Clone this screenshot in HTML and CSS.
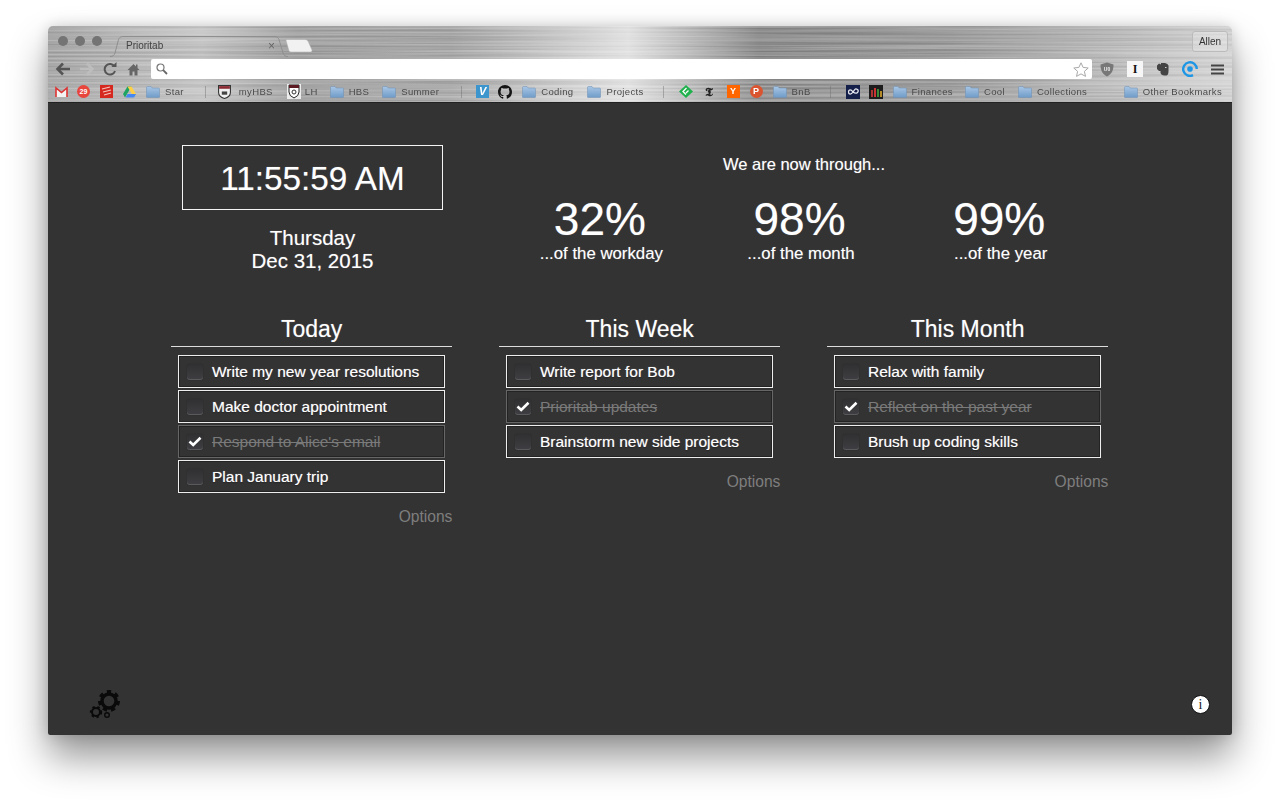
FILE: index.html
```html
<!DOCTYPE html>
<html lang="en">
<head>
<meta charset="utf-8">
<title>Prioritab</title>
<link rel="stylesheet" href="styles.css">
</head>
<body>
<svg class="defs" width="0" height="0" aria-hidden="true">
  <defs>
    <linearGradient id="fg" x1="0" y1="0" x2="0" y2="1"><stop offset="0" stop-color="#a9c6e4"/><stop offset="1" stop-color="#6f9cc9"/></linearGradient>
    <symbol id="folder" viewBox="0 0 14 12"><path d="M0.5 2V1.5Q0.5 0.5 1.5 0.5H5L6.2 2H12.5Q13.5 2 13.5 3V11Q13.5 11.5 13 11.5H1Q0.5 11.5 0.5 11Z" fill="url(#fg)" stroke="#6d8fb2" stroke-width=".5"/></symbol>
    <filter id="brushed" x="0" y="0" width="100%" height="100%" color-interpolation-filters="sRGB">
      <feTurbulence type="fractalNoise" baseFrequency="0.003 0.5" numOctaves="3" seed="7"/>
      <feColorMatrix type="matrix" values="2.500 0 0 0 -.75  2.500 0 0 0 -.75  2.500 0 0 0 -.75  0 0 0 0 1"/>
    </filter>
  </defs>
</svg>
<main class="window">
  <header class="chrome">
    <svg class="metal" width="1184" height="77" aria-hidden="true"><rect width="1184" height="77" filter="url(#brushed)"/></svg>
    <div class="tabstrip">
      <div class="lights"><i></i><i></i><i></i></div>
      <div class="tab">
        <svg class="tab-shape" width="178" height="21" viewBox="0 0 178 21" aria-hidden="true"><path d="M0 20.500C3 20.500 4 19.500 5 17L8.500 3.500C9.500 1.500 10.500 .5 13 .5H165C167 .5 168 1.500 169 3.500L173 17C174 19.500 175 20.500 178 20.500" fill="none" stroke="#8f8f8f"/></svg>
        <span class="tab-title">Prioritab</span>
        <span class="tab-close">×</span>
      </div>
      <svg class="newtab" width="28" height="14" viewBox="0 0 28 14" aria-hidden="true"><path d="M1 1.500Q1 .5 2 .5H20Q22 .5 23 2L27 11Q27.500 13 25.500 13H6Q4.500 13 4 12Z" fill="#f1f1f1" stroke="#aaa" stroke-width=".5"/></svg>
      <div class="profile">Allen</div>
    </div>
    <div class="toolbar">
      <svg class="tb back" width="16" height="14" viewBox="0 0 16 14" aria-hidden="true"><path d="M15 7H3M8 1.500 2.500 7 8 12.500" fill="none" stroke="#555" stroke-width="2.600"/></svg>
      <svg class="tb fwd" width="16" height="14" viewBox="0 0 16 14" aria-hidden="true"><path d="M1 7H13M8 1.500 13.500 7 8 12.500" fill="none" stroke="#bdbdbd" stroke-width="2.600"/></svg>
      <svg class="tb reload" width="14" height="14" viewBox="0 0 14 14" aria-hidden="true"><path d="M11.500 4.500A5.300 5.300 0 1 0 12 9" fill="none" stroke="#555" stroke-width="2"/><path d="M8.500 5H13.500V0Z" fill="#555"/></svg>
      <svg class="tb home" width="13" height="13" viewBox="0 0 13 13" aria-hidden="true"><path d="M6.500 1 0.500 7H2.500V12.500H5.500V8.500H7.500V12.500H10.500V7H12.500L10.500 5V1.500H9V3.500Z" fill="#666"/></svg>
      <div class="omnibox">
        <svg width="12" height="12" viewBox="0 0 12 12" aria-hidden="true"><circle cx="4.500" cy="4.500" r="3.500" fill="none" stroke="#777" stroke-width="1.200"/><path d="M7.200 7.200 11 11" stroke="#666" stroke-width="1.800"/></svg>
        <svg width="16" height="15" viewBox="0 0 16 15" aria-hidden="true"><path d="M8 .8 10.100 5.400 15.200 6 11.400 9.400 12.500 14.400 8 11.900 3.500 14.400 4.600 9.400 .8 6 5.900 5.400Z" fill="#fff" stroke="#a8a8a8"/></svg>
      </div>
      <svg class="ext ublock" width="14" height="15" viewBox="0 0 14 15" aria-hidden="true"><path d="M7 .5 13.500 2.500C13.500 8 12 12 7 14.500 2 12 .5 8 .5 2.500Z" fill="#777"/><text x="7" y="9" text-anchor="middle" class="ub">U0</text></svg>
      <div class="ext ibox">I</div>
      <svg class="ext elephant" width="13" height="14" viewBox="0 0 13 14" aria-hidden="true"><path d="M3 1.500 1 3.500V7L3 9H4.500V11Q5 13 8 13.500H10.500Q12.500 13 12.500 9V3.500Q12 1.500 9 1H5V2.500Z" fill="#444"/><path d="M9 5.500H10.500" stroke="#ccc"/></svg>
      <svg class="ext at" width="16" height="16" viewBox="0 0 16 16" aria-hidden="true"><path d="M14.800 8A6.800 6.800 0 1 0 11 14.200" fill="none" stroke="#1e96e6" stroke-width="2.400"/><circle cx="8" cy="8" r="2.800" fill="#1e96e6"/></svg>
      <svg class="ext menu" width="13" height="11" viewBox="0 0 13 11" aria-hidden="true"><path d="M0 1.500H13M0 5.500H13M0 9.500H13" stroke="#444" stroke-width="1.800"/></svg>
    </div>
    <nav class="bookmarks">
      <svg class="bm-icon g7" width="13" height="12" viewBox="0 0 13 12" aria-hidden="true"><path d="M1 11V2L6.500 6.500 12 2V11" fill="#f3f3f3" stroke="#d33" stroke-width="1.600"/></svg>
      <span class="bm-badge g9">29</span>
      <svg class="bm-icon g10" width="13" height="13" viewBox="0 0 13 13" aria-hidden="true"><rect width="13" height="13" fill="#d5281f"/><path d="M2 4 10 2M3 7 11 5M4 10 11 8" stroke="#f6c5bf" stroke-width="1.200"/></svg>
      <svg class="bm-icon g10" width="13" height="12" viewBox="0 0 13 12" aria-hidden="true"><path d="M4.500 .5H8.500L4 8 2 11.500 0 8Z" fill="#1ea362"/><path d="M4.500 .5H8.500L13 8H9Z" fill="#ffcf48"/><path d="M2.500 11.500 4.500 8H13L11 11.500Z" fill="#4688f1"/></svg>
      <a class="bm g10"><svg width="14" height="12"><use href="#folder"/></svg>Star</a>
      <span class="sep g21"></span>
      <svg class="bm-icon g12" width="13" height="14" viewBox="0 0 12 13" aria-hidden="true"><path d="M.5 .5H11.500V7Q11.500 11 6 12.500 .5 11 .5 7Z" fill="#efefef" stroke="#333"/><path d="M1 1H11V3.500H1Z" fill="#8a2a32"/><path d="M3.500 6H8.500V9H3.500Z" fill="#444"/></svg>
      <a class="bm g8">myHBS</a>
      <svg class="bm-icon g14" width="14" height="15" viewBox="0 0 14 15" aria-hidden="true"><rect width="14" height="15" fill="#ededed"/><path d="M2 1H12V8Q12 12 7 14 2 12 2 8Z" fill="#fff" stroke="#222"/><path d="M2 1H12V4H2Z" fill="#5c1a22"/><circle cx="7" cy="8" r="2" fill="none" stroke="#333"/></svg>
      <a class="bm g4">LH</a>
      <a class="bm g12"><svg width="14" height="12"><use href="#folder"/></svg>HBS</a>
      <a class="bm g13"><svg width="14" height="12"><use href="#folder"/></svg>Summer</a>
      <span class="sep g22"></span>
      <span class="bm-venmo g14">V</span>
      <svg class="bm-icon g9" width="14" height="14" viewBox="0 0 16 16" aria-hidden="true"><path d="M8 0C3.580 0 0 3.580 0 8c0 3.540 2.290 6.530 5.470 7.590.4.070.55-.17.55-.38 0-.19-.01-.82-.01-1.490-2.010.37-2.530-.49-2.690-.94-.09-.23-.48-.94-.82-1.130-.28-.15-.68-.52-.01-.53.63-.01 1.080.58 1.230.82.720 1.210 1.870.870 2.330.660.070-.520.280-.870.510-1.070-1.780-.2-3.640-.89-3.640-3.950 0-.870.310-1.590.820-2.150-.08-.2-.36-1.020.08-2.120 0 0 .67-.21 2.200.820.640-.18 1.320-.270 2-.270s1.360.09 2 .270c1.530-1.040 2.200-.820 2.200-.820.440 1.100.160 1.920.08 2.120.510.560.820 1.270.820 2.150 0 3.070-1.870 3.750-3.650 3.950.290.250.540.730.540 1.480 0 1.070-.01 1.930-.01 2.200 0 .210.150.460.550.380A8.013 8.013 0 0 0 16 8c0-4.420-3.580-8-8-8z" fill="#151515"/></svg>
      <a class="bm g10"><svg width="14" height="12"><use href="#folder"/></svg>Coding</a>
      <a class="bm g14"><svg width="14" height="12"><use href="#folder"/></svg>Projects</a>
      <span class="sep g19"></span>
      <svg class="bm-icon g15" width="14" height="13" viewBox="0 0 14 13" aria-hidden="true"><path d="M7 0 14 6.500 7 13 0 6.500Z" fill="#1eb14c"/><path d="M7.500 3 4 6.500 7 9.500M9.500 5.500 7 8" stroke="#fff" stroke-width="1.300" fill="none"/></svg>
      <span class="bm-nyt g10">𝕿</span>
      <span class="bm-y g11">Y</span>
      <span class="bm-p g10">P</span>
      <a class="bm g10"><svg width="14" height="12"><use href="#folder"/></svg>BnB</a>
      <span class="sep g19"></span>
      <svg class="bm-icon g15" width="14" height="14" viewBox="0 0 14 14" aria-hidden="true"><rect width="14" height="14" fill="#14204a"/><path d="M7 7C5 4 2.500 4.500 2.500 7S5 10 7 7 9.500 3 11.500 4.500 11 10 7 7Z" fill="none" stroke="#e8e8f2" stroke-width="1.300"/></svg>
      <svg class="bm-icon g9" width="14" height="14" viewBox="0 0 14 14" aria-hidden="true"><rect width="14" height="14" fill="#1c1c1c"/><path d="M2 5H4V12H2Z" fill="#a33"/><path d="M5 3H7V12H5Z" fill="#c33"/><path d="M8 4H10V12H8Z" fill="#3a8a35"/><path d="M11 6H13V12H11Z" fill="#b58b2a"/></svg>
      <a class="bm g10"><svg width="14" height="12"><use href="#folder"/></svg>Finances</a>
      <a class="bm g12"><svg width="14" height="12"><use href="#folder"/></svg>Cool</a>
      <a class="bm g13"><svg width="14" height="12"><use href="#folder"/></svg>Collections</a>
      <a class="bm other"><svg width="14" height="12"><use href="#folder"/></svg>Other Bookmarks</a>
    </nav>
  </header>
  <div class="content">
    <section class="top">
      <div class="clock">
        <div class="time">11:55:59 AM</div>
        <div class="date">Thursday<br>Dec 31, 2015</div>
      </div>
      <div class="progress">
        <h2 class="through">We are now through...</h2>
        <div class="stats">
          <div class="stat"><div class="pct">32%</div><div class="of">...of the workday</div></div>
          <div class="stat"><div class="pct">98%</div><div class="of">...of the month</div></div>
          <div class="stat"><div class="pct">99%</div><div class="of">...of the year</div></div>
        </div>
      </div>
    </section>
    <section class="lists">
      <div class="list">
        <h3 class="list-title">Today</h3>
        <ul class="items">
          <li class="item"><span class="check"></span>Write my new year resolutions</li>
          <li class="item"><span class="check"></span>Make doctor appointment</li>
          <li class="item done"><span class="check"><svg width="14" height="11" viewBox="0 0 14 11" aria-hidden="true"><path d="M1.500 5.500 5.200 9 12.500 1.800" fill="none" stroke="#fff" stroke-width="2.600"/></svg></span><span class="done-text">Respond to Alice's email</span></li>
          <li class="item"><span class="check"></span>Plan January trip</li>
        </ul>
        <div class="options">Options</div>
      </div>
      <div class="list">
        <h3 class="list-title">This Week</h3>
        <ul class="items">
          <li class="item"><span class="check"></span>Write report for Bob</li>
          <li class="item done"><span class="check"><svg width="14" height="11" viewBox="0 0 14 11" aria-hidden="true"><path d="M1.500 5.500 5.200 9 12.500 1.800" fill="none" stroke="#fff" stroke-width="2.600"/></svg></span><span class="done-text">Prioritab updates</span></li>
          <li class="item"><span class="check"></span>Brainstorm new side projects</li>
        </ul>
        <div class="options">Options</div>
      </div>
      <div class="list">
        <h3 class="list-title">This Month</h3>
        <ul class="items">
          <li class="item"><span class="check"></span>Relax with family</li>
          <li class="item done"><span class="check"><svg width="14" height="11" viewBox="0 0 14 11" aria-hidden="true"><path d="M1.500 5.500 5.200 9 12.500 1.800" fill="none" stroke="#fff" stroke-width="2.600"/></svg></span><span class="done-text">Reflect on the past year</span></li>
          <li class="item"><span class="check"></span>Brush up coding skills</li>
        </ul>
        <div class="options">Options</div>
      </div>
    </section>
    <footer class="footer">
      <svg class="gears" width="32" height="32" viewBox="0 0 32 32" aria-hidden="true">
        <g fill="none" stroke="#0a0a0a">
          <circle cx="20" cy="11" r="7" stroke-width="3.400"/>
          <circle cx="20" cy="11" r="9.500" stroke-width="3" stroke-dasharray="4.300 4.160"/>
          <circle cx="7" cy="22" r="4" stroke-width="2"/>
          <circle cx="7" cy="22" r="5.300" stroke-width="1.800" stroke-dasharray="2.400 2.760"/>
          <circle cx="18" cy="25" r="2.300" stroke-width="1.400"/>
        </g>
      </svg>
      <div class="info">i</div>
    </footer>
  </div>
</main>
</body>
</html>
```
FILE: styles.css
```css
* { box-sizing: border-box; }
html, body { margin: 0; height: 800px; overflow: hidden; }
body { background: #fff; padding: 26px 48px 0; font-family: "Liberation Sans", Arial, sans-serif; }
.defs { position: absolute; }
.window {
  width: 1184px; height: 709px; display: flex; flex-direction: column;
  border-radius: 5px 5px 2px 2px; overflow: visible;
  box-shadow: 0 22px 38px rgba(0,0,0,.42), 0 0 14px rgba(0,0,0,.16);
}
.chrome {
  position: relative; isolation: isolate; height: 77px; flex: none; overflow: hidden; border-radius: 5px 5px 0 0;
  background:
    linear-gradient(180deg, rgba(255,255,255,0) 25%, rgba(255,255,255,.08) 100%),
    linear-gradient(90deg, #a6a6a6 0, #c4c4c4 13%, #a2a2a2 21%, #a8a8a8 34%, #e2e2e2 49%, #bdbdbd 54%, #8e8e8e 60%, #9c9c9c 76%, #b8b8b8 89%, #d2d2d2 100%);
  border-bottom: 1px solid #222;
}
.metal { position: absolute; left: 0; top: 0; opacity: .17; mix-blend-mode: overlay; }
.tabstrip { position: relative; height: 31px; display: flex; align-items: flex-start; }
.lights { display: flex; gap: 7px; margin: 10px 0 0 10px; }
.lights i { width: 10px; height: 10px; border-radius: 50%; background: #747474; }
.tab { position: relative; width: 178px; height: 21px; margin: 10px 0 0 8px; display: flex; align-items: center; font-size: 10px; color: #444; }
.tab-shape { position: absolute; left: 0; top: 0; }
.tab-title { margin: 0 0 2px 16px; }
.tab-close { margin: 0 0 2px auto; padding-right: 13px; font-size: 12px; color: #666; }
.newtab { margin: 13px 0 0 -3px; }
.profile { margin: 5px 4px 0 auto; width: 36px; height: 21px; border: 1px solid #bbb; border-radius: 3px; font-size: 10px; line-height: 19px; text-align: center; color: #333; background: rgba(255,255,255,.25); }
.toolbar { position: relative; height: 24px; display: flex; align-items: center; }
.tb { flex: none; }
.back { margin-left: 7px; }
.fwd { margin-left: 8px; }
.reload { margin-left: 8px; }
.home { margin-left: 10px; }
.omnibox { width: 941px; height: 20px; margin-left: 11px; background: #fff; border-radius: 2px; display: flex; align-items: center; justify-content: space-between; padding: 0 3px 0 5px; }
.ext { flex: none; }
.ublock { margin-left: 8px; }
.ub { font: bold 5px "Liberation Sans", sans-serif; fill: #eee; }
.ibox { margin-left: 13px; width: 16px; height: 16px; background: #f6f6f6; font: bold 12px/16px "Liberation Serif", serif; text-align: center; color: #111; }
.elephant { margin-left: 13px; }
.at { margin-left: 13px; }
.menu { margin-left: 13px; }
.bookmarks { position: relative; height: 21px; display: flex; align-items: center; padding-left: 7px; font-size: 9.500px; letter-spacing: .35px; color: #4a4a4a; }
.bm { display: inline-flex; align-items: center; gap: 5px; flex: none; }
.bm-icon { flex: none; }
.other { margin-left: auto; margin-right: 10px; }
.sep { width: 1px; height: 12px; background: rgba(110,110,110,.45); flex: none; }
.g4 { margin-left: 4px; } .g7 { margin-left: 0; } .g8 { margin-left: 8px; } .g9 { margin-left: 9px; } .g10 { margin-left: 10px; }
.g11 { margin-left: 11px; } .g12 { margin-left: 12px; } .g13 { margin-left: 13px; } .g14 { margin-left: 14px; } .g15 { margin-left: 15px; }
.g19 { margin-left: 19px; } .g21 { margin-left: 21px; } .g22 { margin-left: 22px; }
.bm-badge { flex: none; width: 13px; height: 13px; border-radius: 50%; background: #e8453c; color: #fff; font-size: 7px; font-weight: bold; line-height: 13px; text-align: center; letter-spacing: 0; }
.bm-venmo { flex: none; width: 13px; height: 13px; background: #3d95ce; color: #fff; font: italic bold 11px/13px "Liberation Sans", sans-serif; text-align: center; letter-spacing: 0; }
.bm-nyt { flex: none; width: 13px; font: bold 13px/13px "DejaVu Serif", "Liberation Serif", serif; color: #222; text-align: center; letter-spacing: 0; }
.bm-y { flex: none; width: 13px; height: 13px; background: #ff6600; color: #fff; font-size: 9px; font-weight: bold; line-height: 13px; text-align: center; letter-spacing: 0; }
.bm-p { flex: none; width: 13px; height: 13px; border-radius: 50%; background: #da552f; color: #fff; font-size: 9px; font-weight: bold; line-height: 13px; text-align: center; letter-spacing: 0; }

.content { flex: 1; display: flex; flex-direction: column; background: #333; color: #fff; border-radius: 0 0 2px 2px; text-shadow: 0 0 1px rgba(255,255,255,.4); }
.top { height: 214px; display: flex; padding: 42px 0 0 134px; }
.clock { width: 261px; text-align: center; }
.time { height: 65px; border: 1px solid #f4f4f4; font-size: 33.300px; line-height: 65px; }
.date { margin-top: 16px; font-size: 20.500px; line-height: 23px; }
.progress { margin-left: 60px; width: 596px; }
.through { margin: 9px 0 0; padding-left: 6px; font-size: 16.500px; line-height: 20px; font-weight: normal; text-align: center; }
.stats { display: flex; margin: 20px 0 0 -3px; }
.stat { flex: 1; text-align: center; }
.pct { font-size: 46px; line-height: 50px; }
.of { font-size: 16.800px; line-height: 18px; margin-top: 1px; padding-left: 3px; }
.lists { display: flex; gap: 46.600px; padding-left: 123px; }
.list { width: 281.400px; }
.list-title { margin: 0; height: 30px; border-bottom: 1px solid #ddd; font-size: 23px; line-height: 24px; font-weight: normal; text-align: center; }
.items { list-style: none; margin: 8px 7px 0; padding: 0; display: flex; flex-direction: column; gap: 2px; }
.item { height: 33px; border: 1px solid #eee; box-shadow: inset 0 0 0 1px rgba(0,0,0,.3); display: flex; align-items: center; padding-left: 8px; font-size: 15.500px; text-shadow: 0 0 1px rgba(255,255,255,.55), 0 1px 1px rgba(0,0,0,.5); }
.check { flex: none; width: 16px; height: 16px; margin-right: 9px; border-radius: 3px; background: linear-gradient(#303032, #3f3f43); box-shadow: inset 0 -1px 0 #5a5a5d, 0 0 1px #1a1a1a; display: flex; align-items: center; justify-content: center; }
.done { border-color: #666; color: #7a7a7a; text-shadow: none; }
.done-text { text-decoration: line-through; }
.options { margin-top: 15px; text-align: right; font-size: 15.600px; line-height: 18px; color: #7e7e7e; text-shadow: none; }
.footer { margin-top: auto; display: flex; justify-content: space-between; align-items: flex-end; padding: 0 22px 13px 41px; text-shadow: none; }
.gears { display: block; }
.info { width: 19px; height: 19px; margin-bottom: 8px; border-radius: 50%; background: #fff; border: 1px solid #111; color: #222; font: 14px/17px "Liberation Serif", serif; text-align: center; }
```
